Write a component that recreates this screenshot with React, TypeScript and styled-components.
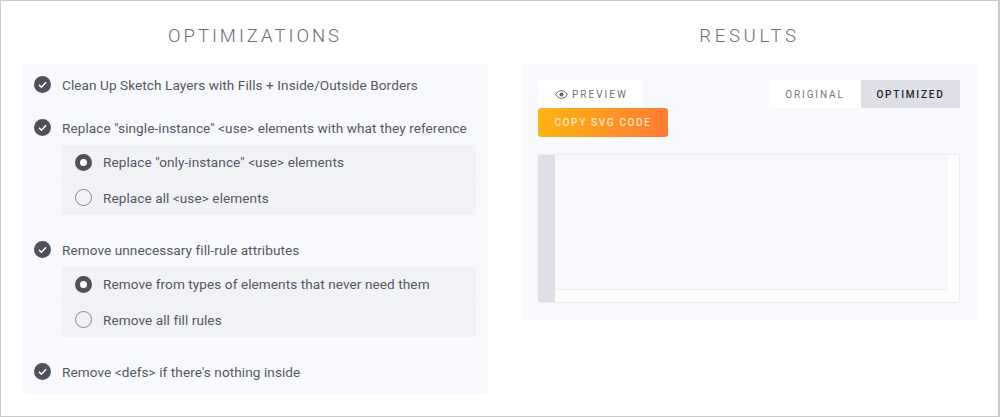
import React from 'react';
import styled, { createGlobalStyle } from 'styled-components';

const GlobalStyle = createGlobalStyle`
	html, body {
		margin: 0;
		padding: 0;
		background: #fff;
	}
	body {
		font-family: 'Roboto', 'Liberation Sans', sans-serif;
		color: #565761;
	}
`;

const Page = styled.div`
	box-sizing: border-box;
	width: 1000px;
	height: 417px;
	border: 1px solid #cbcbcb;
	border-right-width: 2px;
	padding: 0 21px;
	display: grid;
	grid-template-columns: 466px 455px;
	justify-content: space-between;
`;

const Column = styled.section`
	display: flex;
	flex-direction: column;
`;

const Heading = styled.h2<{ $tracking: number }>`
	margin: 0;
	height: 63px;
	line-height: 70px;
	text-align: center;
	font-size: 18.5px;
	font-weight: 300;
	letter-spacing: ${(p) => p.$tracking}px;
	color: #6a6d7b;
`;

const Panel = styled.div`
	background: #f8f9fc;
`;

const Option = styled.div`
	padding: 0 12px;
	border-top: 1px solid #fcfcfe;
	&:first-child {
		border-top: 0;
	}
`;

const OptionHead = styled.div`
	box-sizing: border-box;
	height: 42px;
	padding-bottom: 1px;
	display: flex;
	align-items: center;
	gap: 11px;
	font-size: 13.6px;
	letter-spacing: 0.07px;
	white-space: nowrap;
`;

const CheckIcon = styled.svg`
	width: 17px;
	height: 17px;
	flex: none;
`;

const ChoiceList = styled.div`
	margin: -4px 0 13px 28px;
	background: #f0f2f6;
	border-radius: 2px;
`;

const Choice = styled.div`
	box-sizing: border-box;
	height: 35px;
	padding: 0 0 1px 13px;
	display: flex;
	align-items: center;
	gap: 11px;
	font-size: 13.6px;
	letter-spacing: 0.07px;
	& + & {
		border-top: 1px solid #f5f6f9;
	}
`;

const Radio = styled.span<{ $on?: boolean }>`
	box-sizing: border-box;
	width: 17px;
	height: 17px;
	flex: none;
	border-radius: 50%;
	background: ${(p) => (p.$on ? '#fff' : 'transparent')};
	border: ${(p) => (p.$on ? '5px solid #4f505a' : '1px solid #85868f')};
`;

const ResultPanel = styled(Panel)`
	height: 256px;
	padding: 16px 17px 17px 16px;
	box-sizing: border-box;
`;

const Toolbar = styled.div`
	display: flex;
	justify-content: space-between;
	align-items: flex-start;
`;

const Actions = styled.div`
	display: flex;
	flex-direction: column;
	align-items: flex-start;
`;

const PreviewTab = styled.div`
	box-sizing: border-box;
	width: 105px;
	height: 28px;
	background: #fff;
	border-radius: 2px 2px 0 0;
	display: flex;
	align-items: center;
	padding-left: 17px;
	gap: 4px;
	font-size: 10px;
	letter-spacing: 2px;
	color: #6f717d;
`;

const CopyButton = styled.button`
	box-sizing: border-box;
	width: 130px;
	height: 29px;
	padding: 0;
	border: 0;
	border-radius: 3px;
	background: linear-gradient(100deg, #fdb614 0%, #ff7a34 100%);
	color: #ffe6bd;
	font-family: inherit;
	font-size: 10px;
	font-weight: 500;
	letter-spacing: 1.65px;
`;

const Switcher = styled.div`
	display: flex;
	border-radius: 2px;
	overflow: hidden;
`;

const SwitchItem = styled.div<{ $active?: boolean }>`
	box-sizing: border-box;
	width: ${(p) => (p.$active ? '99px' : '92px')};
	height: 28px;
	display: flex;
	align-items: center;
	justify-content: center;
	font-size: 10px;
	font-weight: ${(p) => (p.$active ? 500 : 400)};
	letter-spacing: ${(p) => (p.$active ? '1.8px' : '1.9px')};
	background: ${(p) => (p.$active ? '#dfdfe7' : '#fff')};
	color: ${(p) => (p.$active ? '#24252c' : '#75767f')};
`;

const CodeFrame = styled.div`
	margin-top: 17px;
	height: 149px;
	box-sizing: border-box;
	border: 1px solid #ecedf2;
	border-left: 0;
	border-radius: 3px;
	background: #fdfdfe;
	display: grid;
	grid-template-columns: 17px 1fr 12px;
	grid-template-rows: 1fr 12px;
	overflow: hidden;
`;

const Gutter = styled.div`
	grid-row: 1 / 3;
	background: #dfdfe7;
`;

const CodeArea = styled.div`
	background: #f8f9fc;
	border-right: 1px solid #f1f1f4;
	border-bottom: 1px solid #eeeef1;
`;

const Check = () => (
	<CheckIcon viewBox="0 0 17 17">
		<circle cx="8.5" cy="8.5" r="8.5" fill="#4f505a" />
		<path d="M5 8.9l2.4 2.3L12.1 6.2" fill="none" stroke="#fff" strokeWidth="1.5" />
	</CheckIcon>
);

const EyeIcon = () => (
	<svg width="13" height="9" viewBox="0 0 13 9">
		<path d="M.7 4.5C2 2 4 .7 6.5.7s4.5 1.3 5.8 3.8C11 7 9 8.3 6.5 8.3S2 7 .7 4.5z" fill="none" stroke="#62636f" strokeWidth="1" />
		<circle cx="6.5" cy="4.5" r="2" fill="#62636f" />
	</svg>
);

const options = [
	{ label: 'Clean Up Sketch Layers with Fills + Inside/Outside Borders' },
	{
		label: 'Replace "single-instance" <use> elements with what they reference',
		choices: ['Replace "only-instance" <use> elements', 'Replace all <use> elements'],
	},
	{
		label: 'Remove unnecessary fill-rule attributes',
		choices: ['Remove from types of elements that never need them', 'Remove all fill rules'],
	},
	{ label: "Remove <defs> if there's nothing inside" },
];

export default function App() {
	return (
		<>
			<GlobalStyle />
			<Page>
				<Column>
					<Heading $tracking={3}>OPTIMIZATIONS</Heading>
					<Panel>
						{options.map((option) => (
							<Option key={option.label}>
								<OptionHead>
									<Check />
									{option.label}
								</OptionHead>
								{option.choices && (
									<ChoiceList>
										{option.choices.map((choice, i) => (
											<Choice key={choice}>
												<Radio $on={i === 0} />
												{choice}
											</Choice>
										))}
									</ChoiceList>
								)}
							</Option>
						))}
					</Panel>
				</Column>
				<Column>
					<Heading $tracking={3.7}>RESULTS</Heading>
					<ResultPanel>
						<Toolbar>
							<Actions>
								<PreviewTab>
									<EyeIcon />
									PREVIEW
								</PreviewTab>
								<CopyButton>COPY SVG CODE</CopyButton>
							</Actions>
							<Switcher>
								<SwitchItem>ORIGINAL</SwitchItem>
								<SwitchItem $active>OPTIMIZED</SwitchItem>
							</Switcher>
						</Toolbar>
						<CodeFrame>
							<Gutter />
							<CodeArea />
						</CodeFrame>
					</ResultPanel>
				</Column>
			</Page>
		</>
	);
}
